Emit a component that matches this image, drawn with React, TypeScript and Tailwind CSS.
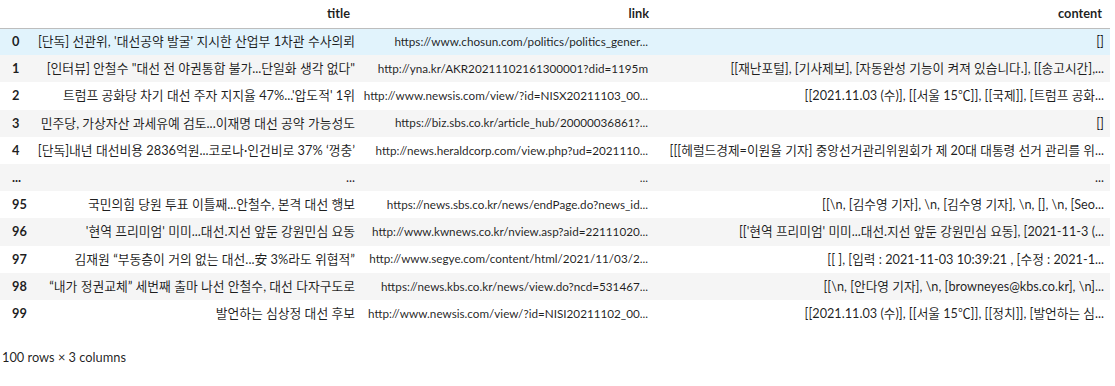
import * as React from 'react';

type Row = { idx: string; title: string; link: string; content: string };

const rows: Row[] = [
  {
    idx: '0',
    title: "[단독] 선관위, '대선공약 발굴' 지시한 산업부 1차관 수사의뢰",
    link: 'https://www.chosun.com/politics/politics_gener...',
    content: '[]',
  },
  {
    idx: '1',
    title: '[인터뷰] 안철수 "대선 전 야권통합 불가...단일화 생각 없다"',
    link: 'http://yna.kr/AKR20211102161300001?did=1195m',
    content: '[[재난포털], [기사제보], [자동완성 기능이 켜져 있습니다.], [[송고시간],...',
  },
  {
    idx: '2',
    title: "트럼프 공화당 차기 대선 주자 지지율 47%...'압도적' 1위",
    link: 'http://www.newsis.com/view/?id=NISX20211103_00...',
    content: '[[2021.11.03 (수)], [[서울 15℃]], [[국제]], [트럼프 공화...',
  },
  {
    idx: '3',
    title: '민주당, 가상자산 과세유예 검토...이재명 대선 공약 가능성도',
    link: 'https://biz.sbs.co.kr/article_hub/20000036861?...',
    content: '[]',
  },
  {
    idx: '4',
    title: '[단독]내년 대선비용 2836억원...코로나·인건비로 37% ‘껑충’',
    link: 'http://news.heraldcorp.com/view.php?ud=2021110...',
    content: '[[[헤럴드경제=이원율 기자] 중앙선거관리위원회가 제 20대 대통령 선거 관리를 위...',
  },
  { idx: '...', title: '...', link: '...', content: '...' },
  {
    idx: '95',
    title: '국민의힘 당원 투표 이틀째...안철수, 본격 대선 행보',
    link: 'https://news.sbs.co.kr/news/endPage.do?news_id...',
    content: '[[\\n, [김수영 기자], \\n, [김수영 기자], \\n, [], \\n, [Seo...',
  },
  {
    idx: '96',
    title: "'현역 프리미엄' 미미...대선.지선 앞둔 강원민심 요동",
    link: 'http://www.kwnews.co.kr/nview.asp?aid=22111020...',
    content: "[['현역 프리미엄' 미미...대선.지선 앞둔 강원민심 요동], [2021-11-3 (...",
  },
  {
    idx: '97',
    title: '김재원 “부동층이 거의 없는 대선...安 3%라도 위협적”',
    link: 'http://www.segye.com/content/html/2021/11/03/2...',
    content: '[[ ], [입력 : 2021-11-03 10:39:21 , [수정 : 2021-1...',
  },
  {
    idx: '98',
    title: '“내가 정권교체” 세번째 출마 나선 안철수, 대선 다자구도로',
    link: 'https://news.kbs.co.kr/news/view.do?ncd=531467...',
    content: '[[\\n, [안다영 기자], \\n, [browneyes@kbs.co.kr], \\n]...',
  },
  {
    idx: '99',
    title: '발언하는 심상정 대선 후보',
    link: 'http://www.newsis.com/view/?id=NISI20211102_00...',
    content: '[[2021.11.03 (수)], [[서울 15℃]], [[정치]], [발언하는 심...',
  },
];

export default function App() {
  return (
    <div
      className="min-h-screen bg-white text-[12.8px] text-[#000000e0]"
      style={{ fontFamily: 'Lato, "Noto Sans CJK KR", sans-serif' }}
    >
      <table className="w-[1110px] table-fixed border-collapse">
        <colgroup>
          <col className="w-[30px]" />
          <col className="w-[328px]" />
          <col className="w-[293px]" />
          <col className="w-[459px]" />
        </colgroup>
        <thead>
          <tr className="h-[28px] border-b border-[#bdbdbd]">
            <th />
            <th className="pr-[8px] text-right font-bold">title</th>
            <th className="pr-[2px] text-right font-bold">link</th>
            <th className="pr-[8px] text-right font-bold">content</th>
          </tr>
        </thead>
        <tbody>
          {rows.map((r, i) => (
            <tr
              key={r.idx}
              className={
                i === 0 ? 'h-[27.2px] bg-[#e1f3fc]' : i % 2 === 1 ? 'h-[27.2px] bg-[#f5f5f5]' : 'h-[27.2px] bg-white'
              }
            >
              <th className="pl-[12px] text-left font-bold whitespace-nowrap">{r.idx}</th>
              <td className="pr-[3px] text-right whitespace-nowrap">{r.title}</td>
              <td className="pr-[3px] text-right text-[11.7px] whitespace-nowrap">{r.link}</td>
              <td className="pr-[6px] text-right text-[12.7px] whitespace-nowrap">{r.content}</td>
            </tr>
          ))}
        </tbody>
      </table>
      <p className="mt-[21px] pl-[2px]">100 rows × 3 columns</p>
    </div>
  );
}
